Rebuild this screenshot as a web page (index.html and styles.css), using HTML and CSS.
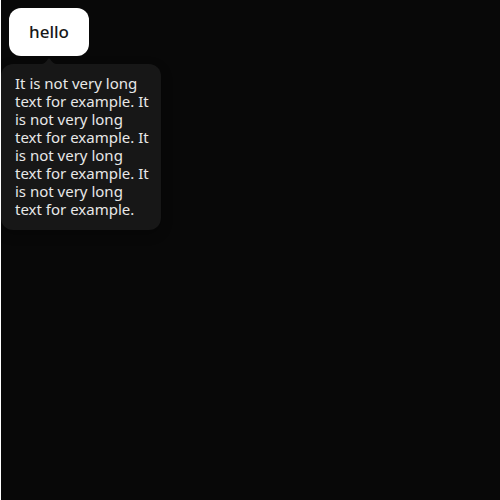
FILE: index.html
```html
<!DOCTYPE html>
<html lang="en">
<head>
<meta charset="utf-8">
<title>Tooltip</title>
<link rel="stylesheet" href="styles.css">
</head>
<body>
<div class="anchor">
<button class="button" type="button" aria-describedby="tip">hello</button>
<div class="tooltip" id="tip" role="tooltip">
<svg class="arrow" width="16" height="6" viewBox="0 0 16 6" aria-hidden="true"><path d="M0 6C3 6 5 4 7 1Q8-.5 9 1C11 4 13 6 16 6Z" fill="currentColor"/></svg>
It is not very long text for example. It is not very long text for example. It is not very long text for example. It is not very long text for example.
</div>
</div>
</body>
</html>
```
FILE: styles.css
```css
* { box-sizing: border-box; }
body {
  margin: 0;
  min-height: 100vh;
  padding: 8px;
  border-left: 1px solid #fff;
  background: #080808;
  font-family: "Noto Sans", sans-serif;
}
.anchor {
  position: relative;
  width: fit-content;
}
.button {
  display: block;
  height: 48px;
  padding: 0 20px;
  border: 0;
  border-radius: 12px;
  background: #fff;
  color: #171717;
  font: 500 17px/24px "Noto Sans", sans-serif;
}
.tooltip {
  position: absolute;
  top: calc(100% + 8px);
  left: 50%;
  width: 160px;
  margin-left: -48px;
  padding: 10px 12px 12px 14px;
  border-radius: 12px;
  background: #171717;
  color: #e8e8e8;
  font-size: 15px;
  line-height: 18px;
  box-shadow: 0 4px 12px rgba(0, 0, 0, 0.3);
}
.arrow {
  position: absolute;
  bottom: 100%;
  left: 40px;
  color: #171717;
}
```
